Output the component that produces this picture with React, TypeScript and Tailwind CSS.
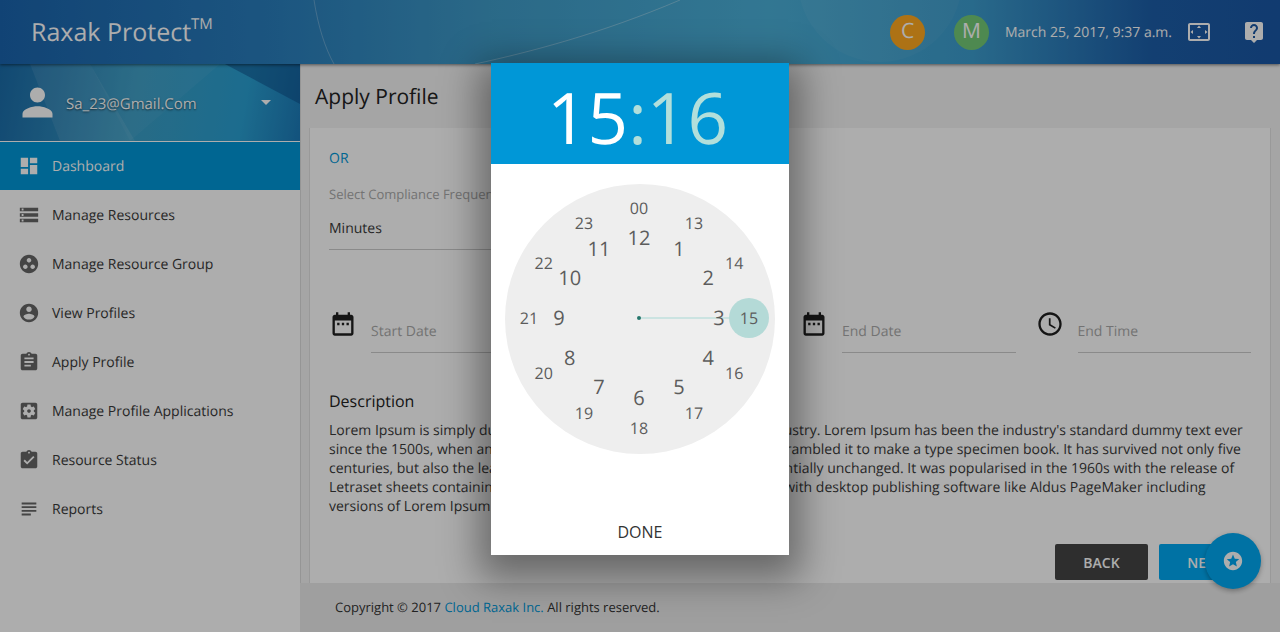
const icons = {
  dashboard: 'M3 13h8V3H3v10zm0 8h8v-6H3v6zm10 0h8V11h-8v10zm0-18v6h8V3h-8z',
  storage: 'M2 20h20v-4H2v4zm2-3h2v2H4v-2zM2 4v4h20V4H2zm4 3H4V5h2v2zm-4 7h20v-4H2v4zm2-3h2v2H4v-2z',
  group: 'M12 2C6.48 2 2 6.48 2 12s4.48 10 10 10 10-4.48 10-10S17.52 2 12 2zM8 17.5c-1.38 0-2.5-1.12-2.5-2.5s1.12-2.5 2.5-2.5 2.5 1.12 2.5 2.5-1.12 2.5-2.5 2.5zM9.5 8c0-1.38 1.12-2.5 2.5-2.5s2.5 1.12 2.5 2.5-1.12 2.5-2.5 2.5S9.5 9.38 9.5 8zm6.5 9.5c-1.38 0-2.5-1.12-2.5-2.5s1.12-2.5 2.5-2.5 2.5 1.12 2.5 2.5-1.12 2.5-2.5 2.5z',
  account: 'M12 2C6.48 2 2 6.48 2 12s4.48 10 10 10 10-4.48 10-10S17.52 2 12 2zm0 3c1.66 0 3 1.34 3 3s-1.34 3-3 3-3-1.34-3-3 1.34-3 3-3zm0 14.2c-2.5 0-4.71-1.28-6-3.22.03-1.99 4-3.08 6-3.08 1.99 0 5.97 1.09 6 3.08-1.29 1.94-3.5 3.22-6 3.22z',
  assignment: 'M19 3h-4.18C14.4 1.84 13.3 1 12 1c-1.3 0-2.4.84-2.82 2H5c-1.1 0-2 .9-2 2v14c0 1.1.9 2 2 2h14c1.1 0 2-.9 2-2V5c0-1.1-.9-2-2-2zm-7 0c.55 0 1 .45 1 1s-.45 1-1 1-1-.45-1-1 .45-1 1-1zm2 14H7v-2h7v2zm3-4H7v-2h10v2zm0-4H7V7h10v2z',
  settings: 'M12 10c-1.1 0-2 .9-2 2s.9 2 2 2 2-.9 2-2-.9-2-2-2zm7-7H5c-1.11 0-2 .9-2 2v14c0 1.1.89 2 2 2h14c1.11 0 2-.9 2-2V5c0-1.1-.89-2-2-2zm-1.75 9c0 .23-.02.46-.05.68l1.48 1.16c.13.11.17.3.08.45l-1.4 2.42c-.09.15-.27.21-.43.15l-1.74-.7c-.36.28-.76.51-1.18.69l-.26 1.85c-.03.17-.18.3-.35.3h-2.8c-.17 0-.32-.13-.35-.29l-.26-1.85c-.43-.18-.82-.41-1.18-.69l-1.74.7c-.16.06-.34 0-.43-.15l-1.4-2.42c-.09-.15-.05-.34.08-.45l1.48-1.16c-.03-.23-.05-.46-.05-.69 0-.23.02-.46.05-.68l-1.48-1.16c-.13-.11-.17-.3-.08-.45l1.4-2.42c.09-.15.27-.21.43-.15l1.74.7c.36-.28.76-.51 1.18-.69l.26-1.85c.03-.17.18-.3.35-.3h2.8c.17 0 .32.13.35.29l.26 1.85c.43.18.82.41 1.18.69l1.74-.7c.16-.06.34 0 .43.15l1.4 2.42c.09.15.05.34-.08.45l-1.48 1.16c.03.23.05.46.05.69z',
  turnedIn: 'M19 3h-4.18C14.4 1.84 13.3 1 12 1c-1.3 0-2.4.84-2.82 2H5c-1.1 0-2 .9-2 2v14c0 1.1.9 2 2 2h14c1.1 0 2-.9 2-2V5c0-1.1-.9-2-2-2zm-7 0c.55 0 1 .45 1 1s-.45 1-1 1-1-.45-1-1 .45-1 1-1zm-2 14l-4-4 1.41-1.41L10 14.17l6.59-6.59L18 9l-8 8z',
  subject: 'M14 17H4v2h10v-2zm6-8H4v2h16V9zM4 15h16v-2H4v2zM4 5v2h16V5H4z',
  person: 'M12 12c2.21 0 4-1.79 4-4s-1.79-4-4-4-4 1.79-4 4 1.79 4 4 4zm0 2c-2.67 0-8 1.34-8 4v2h16v-2c0-2.66-5.33-4-8-4z',
  date: 'M9 11H7v2h2v-2zm4 0h-2v2h2v-2zm4 0h-2v2h2v-2zm2-7h-1V2h-2v2H8V2H6v2H5c-1.11 0-1.99.9-1.99 2L3 20c0 1.1.89 2 2 2h14c1.1 0 2-.9 2-2V6c0-1.1-.9-2-2-2zm0 16H5V9h14v11z',
  time: 'M11.99 2C6.47 2 2 6.48 2 12s4.47 10 9.99 10C17.52 22 22 17.52 22 12S17.52 2 11.99 2zM12 20c-4.42 0-8-3.58-8-8s3.58-8 8-8 8 3.58 8 8-3.58 8-8 8zm.5-13H11v6l5.25 3.15.75-1.23-4.5-2.67z',
  stars: 'M11.99 2C6.47 2 2 6.48 2 12s4.47 10 9.99 10C17.52 22 22 17.52 22 12S17.52 2 11.99 2zm4.24 16L12 15.45 7.77 18l1.12-4.81-3.73-3.23 4.92-.42L12 5l1.92 4.53 4.92.42-3.73 3.23L16.23 18z',
  help: 'M19 2H5c-1.11 0-2 .9-2 2v14c0 1.1.89 2 2 2h4l3 3 3-3h4c1.1 0 2-.9 2-2V4c0-1.1-.9-2-2-2zm-6 16h-2v-2h2v2zm2.07-7.75l-.9.92C13.45 11.9 13 12.5 13 14h-2v-.5c0-1.1.45-2.1 1.17-2.83l1.24-1.26c.37-.36.59-.86.59-1.41 0-1.1-.9-2-2-2s-2 .9-2 2H8c0-2.21 1.79-4 4-4s4 1.79 4 4c0 .88-.36 1.68-.93 2.25z',
  overscan: 'M12.01 5.5L10 8h4l-1.99-2.5zM18 10v4l2.5-1.99L18 10zM6 10l-2.5 2.01L6 14v-4zm8 6h-4l2.01 2.5L14 16zm7-13H3c-1.1 0-2 .9-2 2v14c0 1.1.9 2 2 2h18c1.1 0 2-.9 2-2V5c0-1.1-.9-2-2-2zm0 16.01H3V4.99h18v14.02z',
}

function Icon({ d, className }: { d: string; className?: string }) {
  return (
    <svg viewBox="0 0 24 24" fill="currentColor" className={className}>
      <path d={d} />
    </svg>
  )
}

const navItems = [
  { label: 'Dashboard', icon: icons.dashboard, active: true },
  { label: 'Manage Resources', icon: icons.storage },
  { label: 'Manage Resource Group', icon: icons.group },
  { label: 'View Profiles', icon: icons.account },
  { label: 'Apply Profile', icon: icons.assignment },
  { label: 'Manage Profile Applications', icon: icons.settings },
  { label: 'Resource Status', icon: icons.turnedIn },
  { label: 'Reports', icon: icons.subject },
]

const fields = [
  { label: 'Start Date', icon: icons.date },
  { label: 'Start Time', icon: icons.time },
  { label: 'End Date', icon: icons.date },
  { label: 'End Time', icon: icons.time },
]

const inner = ['12', '1', '2', '3', '4', '5', '6', '7', '8', '9', '10', '11']
const outer = ['00', '13', '14', '15', '16', '17', '18', '19', '20', '21', '22', '23']

function place(i: number, radius: number) {
  const a = (i * Math.PI) / 6
  return { left: 134 + radius * Math.sin(a), top: 134 - radius * Math.cos(a) }
}

function Header() {
  return (
    <header className="relative z-10 flex h-16 shrink-0 items-center overflow-hidden bg-[linear-gradient(90deg,#1a64ad_0%,#2a7fbd_22%,#3f9bc8_38%,#4bb0d8_60%,#3c9ccd_76%,#1c5ea8_90%,#1a57a5_100%)] pl-[31px] pr-[14px] text-white shadow-[0_1px_3px_rgba(0,0,0,0.5)]">
      <svg viewBox="0 0 1280 64" className="absolute inset-0 h-16 w-[1280px]" fill="none">
        <path d="M314 0C318 26 325 48 334 64" stroke="#ffffff" strokeOpacity="0.25" />
        <path d="M475 64C530 52 600 34 680 0" stroke="#ffffff" strokeOpacity="0.3" />
        <circle cx="880" cy="-20" r="82" fill="#ffffff" fillOpacity="0.04" />
      </svg>
      <div className="relative flex items-start text-[25px] font-medium leading-8">
        Raxak Protect<span className="text-[15px] leading-4">TM</span>
      </div>
      <div className="relative ml-auto flex items-center">
        <div className="flex h-[35px] w-[35px] items-center justify-center rounded-full bg-[#ffa91f] text-[21px] font-medium">C</div>
        <div className="ml-[29px] flex h-[35px] w-[35px] items-center justify-center rounded-full bg-[#74cb76] text-[21px] font-medium">M</div>
        <span className="ml-4 mt-[2px] text-sm font-medium">March 25, 2017, 9:37 a.m.</span>
        <Icon d={icons.overscan} className="ml-[15px] h-6 w-6" />
        <Icon d={icons.help} className="ml-[31px] h-6 w-6" />
      </div>
    </header>
  )
}

function Sidebar() {
  return (
    <aside className="flex w-[300px] shrink-0 flex-col bg-white">
      <div className="relative flex h-[78px] items-center overflow-hidden border-b border-white bg-[linear-gradient(100deg,#1a6ba8_0%,#3b9ec6_45%,#2aa0d2_80%,#1c7ab8_100%)] pl-[15px] pr-[29px] text-white">
        <svg viewBox="0 0 300 78" className="absolute inset-0 h-[78px] w-[300px]">
          <polygon points="30,0 90,0 135,77 60,77" fill="#ffffff" fillOpacity="0.08" />
          <polygon points="90,0 220,0 130,77" fill="#ffffff" fillOpacity="0.04" />
          <polygon points="225,0 300,0 300,40" fill="#0b4a86" fillOpacity="0.5" />
        </svg>
        <Icon d={icons.person} className="relative h-[45px] w-[45px]" />
        <span className="relative ml-[6px] mt-1 text-[15px] [text-shadow:0_1px_2px_rgba(0,0,0,0.6)]">Sa_23@Gmail.Com</span>
        <span className="relative ml-auto h-0 w-0 border-x-[5px] border-t-[5px] border-x-transparent border-t-white" />
      </div>
      <nav className="flex flex-col">
        {navItems.map((item) => (
          <div
            key={item.label}
            className={
              item.active
                ? 'flex h-12 items-center bg-[#0097d7] pl-[18px] text-sm font-medium text-white'
                : 'flex h-[49px] items-center pl-[18px] text-sm text-[#3a3a3a]'
            }
          >
            <Icon d={item.icon} className={item.active ? 'h-[22px] w-[22px] text-white' : 'h-[22px] w-[22px] text-[#666666]'} />
            <span className="ml-3 mt-[2px]">{item.label}</span>
          </div>
        ))}
      </nav>
    </aside>
  )
}

function Content() {
  return (
    <main className="flex min-w-0 flex-1 flex-col bg-[#f3f3f3] shadow-[inset_1px_0_0_#dcdcdc]">
      <div className="flex h-16 shrink-0 items-center pl-[15px] pt-1">
        <h1 className="text-[21px] text-[#222222]">Apply Profile</h1>
      </div>
      <section className="ml-[9px] mr-[9px] flex-1 overflow-hidden border-x border-[#e2e2e2] bg-white px-[19px]">
        <p className="mt-[21px] text-sm leading-5 text-[#0097d7]">OR</p>
        <div className="mt-[17px] w-1/3 border-b border-[#cccccc] pb-[10px]">
          <p className="text-[13px] leading-[17px] text-[#aaaaaa]">Select Compliance Frequency</p>
          <p className="mt-4 text-sm leading-5 text-[#3a3a3a]">Minutes</p>
        </div>
        <div className="mt-[62px] grid grid-cols-4 gap-x-5">
          {fields.map((field) => (
            <div key={field.label} className="flex">
              <Icon d={field.icon} className="-mt-[2px] h-[28px] w-[28px] shrink-0 text-[#1f1f1f]" />
              <div className="ml-[14px] flex h-[41px] flex-1 items-end border-b border-[#cccccc] pb-[10px] text-sm leading-5 text-[#aaaaaa]">
                {field.label}
              </div>
            </div>
          ))}
        </div>
        <h2 className="mt-[36px] text-base leading-6 text-[#222222]">Description</h2>
        <p className="mt-2 text-sm leading-[19px] text-[#3a3a3a]">
          Lorem Ipsum is simply dummy text of the printing and typesetting industry. Lorem Ipsum has been the industry's standard dummy text ever since the 1500s, when an unknown printer took a galley of type and scrambled it to make a type specimen book. It has survived not only five centuries, but also the leap into electronic typesetting, remaining essentially unchanged. It was popularised in the 1960s with the release of Letraset sheets containing Lorem Ipsum passages, and more recently with desktop publishing software like Aldus PageMaker including versions of Lorem Ipsum.
        </p>
        <div className="mt-7 flex justify-end gap-[11px]">
          <button className="flex h-9 w-[93px] items-center justify-center rounded-[2px] bg-[#444444] pt-[2px] text-sm font-semibold text-white">BACK</button>
          <button className="flex h-9 w-[92px] items-center justify-center rounded-[2px] bg-[#00a9f2] pt-[2px] text-sm font-semibold text-white">NEXT</button>
        </div>
      </section>
      <footer className="flex h-[49px] shrink-0 items-center bg-[#ebebeb] pl-[35px] text-[13px] text-[#333333]">
        <span>
          Copyright © 2017 <span className="text-[#0097d7]">Cloud Raxak Inc.</span> All rights reserved.
        </span>
      </footer>
    </main>
  )
}

function TimePicker() {
  return (
    <div className="absolute left-[491px] top-[63px] z-30 flex h-[492px] w-[298px] flex-col bg-white shadow-[0_12px_36px_12px_rgba(0,0,0,0.4)]">
      <div className="flex h-[101px] shrink-0 items-center justify-center bg-[#0097d7] pr-[5px] pt-[5px] text-[71px] font-normal leading-none text-[#b2dfdb]">
        <span className="text-white">15</span>:16
      </div>
      <div className="relative mx-auto mt-5 h-[270px] w-[270px] shrink-0 rounded-full bg-[#eeeeee] text-[#5c5c5c]">
        <div className="absolute left-[135px] top-[133px] h-[2px] w-[90px] bg-[#cbe3e1]" />
        <div className="absolute left-[224px] top-[114px] h-10 w-10 rounded-full bg-[#b4dad7]" />
        <div className="absolute left-[132px] top-[132px] h-1 w-1 rounded-full bg-[#26766c]" />
        {inner.map((n, i) => (
          <span key={n} className="absolute -translate-x-1/2 -translate-y-1/2 text-xl leading-none" style={place(i, 80)}>{n}</span>
        ))}
        {outer.map((n, i) => (
          <span key={n} className="absolute -translate-x-1/2 -translate-y-1/2 text-base leading-none" style={place(i, 110)}>{n}</span>
        ))}
      </div>
      <button className="mt-auto mb-[11px] text-base leading-6 text-[#333333]">DONE</button>
    </div>
  )
}

export default function App() {
  return (
    <div className="relative flex h-[632px] w-[1280px] flex-col overflow-hidden font-['Open_Sans',sans-serif] [text-rendering:geometricPrecision]">
      <Header />
      <div className="flex min-h-0 flex-1">
        <Sidebar />
        <Content />
      </div>
      <div className="absolute left-[1205px] top-[533px] z-10 flex h-14 w-14 items-center justify-center rounded-full bg-[#00a9f2] text-white shadow-[0_2px_5px_rgba(0,0,0,0.3)]">
        <Icon d={icons.stars} className="h-[22px] w-[22px]" />
      </div>
      <div className="absolute inset-0 z-20 bg-black/32" />
      <TimePicker />
    </div>
  )
}
